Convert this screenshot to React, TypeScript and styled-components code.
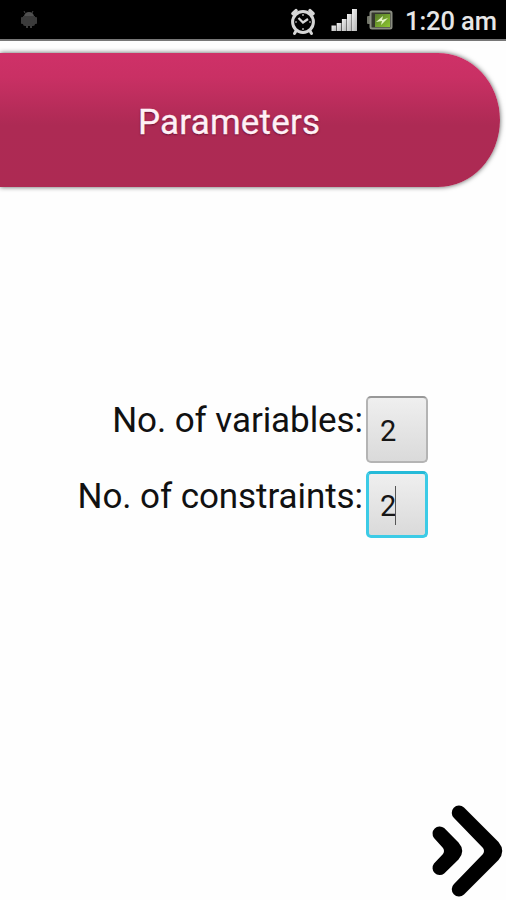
import React from "react";
import styled, { createGlobalStyle } from "styled-components";

const GlobalStyle = createGlobalStyle`
  * { box-sizing: border-box; }
  body { margin: 0; background: #fefefe; font-family: Roboto, "Noto Sans", sans-serif; }
`;

const Screen = styled.div`
  width: 506px;
  height: 900px;
  display: flex;
  flex-direction: column;
  background: #fefefe;
  overflow: hidden;
`;

const StatusBar = styled.header`
  height: 41px;
  flex: none;
  display: flex;
  align-items: center;
  justify-content: space-between;
  padding: 0 9px 0 20px;
  background: #000;
  border-bottom: 2px solid #777;
`;

const StatusIcons = styled.div`
  display: flex;
  align-items: center;
`;

const AlarmIcon = styled.svg`
  margin: 4px 15px 0 0;
`;

const SignalIcon = styled.svg`
  margin: 1px 10px 0 0;
`;

const BatteryIcon = styled.svg`
  margin-right: 12px;
`;

const Clock = styled.time`
  width: 92px;
  color: #e6e6e6;
  font-size: 25.5px;
  font-weight: 500;
  line-height: 38px;
  padding-top: 3px;
  letter-spacing: -0.1px;
  white-space: nowrap;
`;

const Banner = styled.h1`
  flex: none;
  width: 500px;
  height: 134px;
  margin: 12px 0 0;
  padding: 6px 0 0 138px;
  display: flex;
  align-items: center;
  color: #fff0f6;
  font-size: 35px;
  font-weight: 400;
  letter-spacing: 0.2px;
  line-height: 40px;
  -webkit-text-stroke: 0.3px #fff0f6;
  text-shadow: 0 1px 2px rgba(70, 0, 30, 0.7);
  background: linear-gradient(#cf3168 0%, #c93064 18%, #ad2a54 54%, #ad2a53 100%);
  border-radius: 0 62px 62px 0 / 0 67px 67px 0;
  box-shadow: 0 0 5px rgba(0, 0, 0, 0.65);
`;

const Form = styled.main`
  flex: 1;
  display: flex;
  flex-direction: column;
  gap: 8px;
  padding: 209px 78px 0 0;
`;

const Field = styled.label`
  display: flex;
  justify-content: flex-end;
  height: 67px;
`;

const FieldName = styled.span<{ $drop: number }>`
  color: #111;
  font-size: 35px;
  line-height: 40px;
  padding-top: ${({ $drop }) => $drop}px;
  margin-right: 3px;
  letter-spacing: -0.07px;
  white-space: nowrap;
`;

const NumberBox = styled.span<{ $focused?: boolean }>`
  width: 62px;
  height: 67px;
  display: flex;
  align-items: center;
  padding: 2px 0 0 ${({ $focused }) => ($focused ? 11 : 12)}px;
  color: #161616;
  font-size: 29px;
  border: ${({ $focused }) => ($focused ? "3px solid #3ccbe6" : "2px solid #b4b4b4")};
  border-top-color: ${({ $focused }) => ($focused ? "#25bad8" : "#989898")};
  border-radius: 5px;
  background: linear-gradient(#efefef, #dadada);
`;

const Caret = styled.i`
  width: 1px;
  height: 39px;
  margin-left: -1px;
  background: #555;
`;

const Footer = styled.footer`
  flex: none;
  height: 98px;
  display: flex;
  justify-content: flex-end;
`;

const NextButton = styled.button`
  width: 76px;
  height: 98px;
  padding: 0;
  border: 0;
  background: none;
`;

const AndroidGlyph = () => (
  <svg width="18" height="20" viewBox="0 0 18 20" fill="#3b3b3b">
    <path d="M5 3 4 1M12 3l1-2" stroke="#444" />
    <path d="M4 6Q5 2 9 2t5 4Z" fill="#505050" />
    <path d="M3 6h12v8q0 2-2 2H5q-2 0-2-2Z" />
    <rect x="1" y="7" width="2.500" height="7" rx="1" />
    <rect x="14.500" y="7" width="2.500" height="7" rx="1" />
    <path d="M6 15h2v3H6zM10 15h2v3h-2z" />
  </svg>
);

const Alarm = () => (
  <AlarmIcon width="26" height="28" viewBox="0 0 26 28" fill="none" stroke="#d6d6d6">
    <circle cx="13" cy="14" r="10.400" strokeWidth="3" />
    <path d="M3 5.500 6 2.700M20 2.700l3 2.800" strokeWidth="3.600" strokeLinecap="round" />
    <path d="m6 23-1.500 2.500M20 23l1.500 2.500" strokeWidth="3" strokeLinecap="round" />
    <path d="m8.500 10 4.500 4.500 5-3.500" strokeWidth="2.300" />
    <path d="M13 6v2M13 20v2M5 14h2M19 14h2" strokeWidth="1.200" />
  </AlarmIcon>
);

const Signal = () => (
  <SignalIcon width="26" height="24" viewBox="0 0 26 24">
    <defs>
      <linearGradient id="bars" x1="0" y1="0" x2="1" y2="1">
        <stop offset="0" stopColor="#f2f2f2" />
        <stop offset="1" stopColor="#b5b5b5" />
      </linearGradient>
    </defs>
    <g fill="url(#bars)">
      <rect x="0.500" y="17.500" width="4.700" height="5.500" />
      <rect x="5.700" y="15" width="4.700" height="8" />
      <rect x="10.900" y="11" width="4.700" height="12" />
      <rect x="16" y="6" width="4.700" height="17" />
      <rect x="21" y="1" width="5" height="22" />
    </g>
  </SignalIcon>
);

const Battery = () => (
  <BatteryIcon width="26" height="20" viewBox="0 0 26 20">
    <defs>
      <linearGradient id="charge" x1="0" y1="0" x2="1" y2="1">
        <stop offset="0" stopColor="#55782b" />
        <stop offset="1" stopColor="#8ec82f" />
      </linearGradient>
    </defs>
    <rect x="0" y="6" width="4" height="8" rx="1" fill="#727569" />
    <rect x="3.500" y="1.500" width="21" height="17" rx="1.500" fill="#34372d" stroke="#8a8d82" strokeWidth="2" />
    <rect x="8" y="4" width="15" height="13" fill="url(#charge)" />
    <path d="m9 12 7-6-1 4 6-2-7 7 1-4Z" fill="#e5f5c4" />
  </BatteryIcon>
);

export default function App() {
  return (
    <>
      <GlobalStyle />
      <Screen>
        <StatusBar>
          <AndroidGlyph />
          <StatusIcons>
            <Alarm />
            <Signal />
            <Battery />
            <Clock>1:20 am</Clock>
          </StatusIcons>
        </StatusBar>
        <Banner>Parameters</Banner>
        <Form>
          <Field>
            <FieldName $drop={5}>No. of variables:</FieldName>
            <NumberBox>2</NumberBox>
          </Field>
          <Field>
            <FieldName $drop={6}>No. of constraints:</FieldName>
            <NumberBox $focused>
              2<Caret />
            </NumberBox>
          </Field>
        </Form>
        <Footer>
          <NextButton aria-label="Next">
            <svg width="76" height="98" viewBox="0 0 76 98">
              <path d="M4 36A7.200 7.200 0 0 1 14.200 26L28.500 40.500Q36 49 28.500 57.500L14.200 71.500A7.200 7.200 0 0 1 4 61.500L13 52Q15 49 13 46Z" />
              <path d="M24 16A7.200 7.200 0 0 1 34 5.500L68.500 40Q76 49 68.500 58L34 92.500A7.200 7.200 0 0 1 24 82L53 52Q55 49 53 46Z" />
            </svg>
          </NextButton>
        </Footer>
      </Screen>
    </>
  );
}
